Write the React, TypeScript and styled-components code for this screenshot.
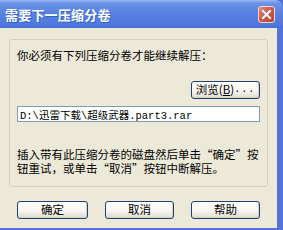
import * as React from 'react'
import styled, { createGlobalStyle } from 'styled-components'

const GlobalStyle = createGlobalStyle`
  * {
    box-sizing: border-box;
  }
  body {
    margin: 0;
    background: #ece9d8;
    font-family: "Noto Sans CJK SC", "Liberation Sans", sans-serif;
  }
`

const Window = styled.div`
  width: 283px;
  height: 230px;
  display: flex;
  flex-direction: column;
  overflow: hidden;
  background: #4f6fd9;
`

const TitleBar = styled.div`
  height: 28px;
  flex: none;
  display: flex;
  align-items: center;
  justify-content: space-between;
  padding: 0 8px 0 5px;
  border-top-right-radius: 8px;
  background: linear-gradient(
    to bottom,
    #9ab8f2 0%,
    #6a92e6 12%,
    #5883e1 45%,
    #4f79dc 85%,
    #4570d4 100%
  );
`

const Title = styled.span`
  color: #fff;
  font-size: 13px;
  font-weight: bold;
  letter-spacing: 0.2px;
  text-shadow: 1px 1px 0 #3a5fbf;
`

const CloseButton = styled.div`
  width: 17px;
  height: 17px;
  display: flex;
  align-items: center;
  justify-content: center;
  border: 1px solid #f2d8d4;
  border-radius: 3px;
  background: linear-gradient(135deg, #e08a7c 0%, #c9584a 50%, #b84434 100%);
`

const Frame = styled.div`
  flex: 1;
  display: flex;
  flex-direction: column;
  padding: 11px 9px 0 9px;
  background: #ece9d8;
  border-right: 6px solid #5671d8;
  border-bottom: 2px solid #5671d8;
`

const GroupBox = styled.div`
  height: 148px;
  display: flex;
  flex-direction: column;
  padding: 8px 7px 0 7px;
  border: 1px solid #d3d0bd;
  border-radius: 3px;
`

const Prompt = styled.div`
  font-size: 11.5px;
  line-height: 14px;
  color: #000;
`

const BrowseRow = styled.div`
  display: flex;
  justify-content: flex-end;
  margin-top: 19px;
`

const Button = styled.button<{ $w: number }>`
  width: ${({ $w }) => $w}px;
  height: 18px;
  padding: 0;
  display: flex;
  align-items: center;
  justify-content: center;
  font-family: "Noto Sans CJK SC", "Liberation Mono", monospace;
  font-size: 11.5px;
  line-height: 1;
  color: #000;
  border: 1px solid #23406e;
  border-radius: 3px;
  background: linear-gradient(to bottom, #ffffff 0%, #f6f5f0 55%, #dedbd0 100%);
  box-shadow: inset -1px -1px 0 #d6d0c0;
`

const Dots = styled.span`
  font-family: "Liberation Mono", monospace;
  font-size: 10px;
  letter-spacing: 1px;
`

const PathInput = styled.input`
  margin-top: 7px;
  height: 16px;
  width: 100%;
  padding: 0 2px;
  border: 1px solid #7f9db9;
  background: #fff;
  font-family: "Liberation Mono", "Noto Sans CJK SC", monospace;
  font-size: 10.5px;
  color: #000;
  outline: none;
`

const Info = styled.div`
  margin-top: 26px;
  font-size: 11.5px;
  line-height: 13.5px;
  color: #000;
  white-space: nowrap;
`

const ButtonRow = styled.div`
  display: flex;
  gap: 17px;
  margin-top: 14px;
  padding: 0 8px;
`

const CloseIcon = () => (
  <svg width="11" height="11" viewBox="0 0 11 11">
    <path d="M2 2 L9 9 M9 2 L2 9" stroke="#fff" strokeWidth="2" strokeLinecap="square" />
  </svg>
)

export default function App() {
  return (
    <>
      <GlobalStyle />
      <Window>
        <TitleBar>
          <Title>需要下一压缩分卷</Title>
          <CloseButton>
            <CloseIcon />
          </CloseButton>
        </TitleBar>
        <Frame>
          <GroupBox>
            <Prompt>你必须有下列压缩分卷才能继续解压：</Prompt>
            <BrowseRow>
              <Button $w={69}>
                浏览(<u>B</u>)<Dots>...</Dots>
              </Button>
            </BrowseRow>
            <PathInput readOnly value="D:\迅雷下载\超级武器.part3.rar" />
            <Info>
              插入带有此压缩分卷的磁盘然后单击“确定”按
              <br />
              钮重试，或单击“取消”按钮中断解压。
            </Info>
          </GroupBox>
          <ButtonRow>
            <Button $w={71}>确定</Button>
            <Button $w={69}>取消</Button>
            <Button $w={69}>帮助</Button>
          </ButtonRow>
        </Frame>
      </Window>
    </>
  )
}
